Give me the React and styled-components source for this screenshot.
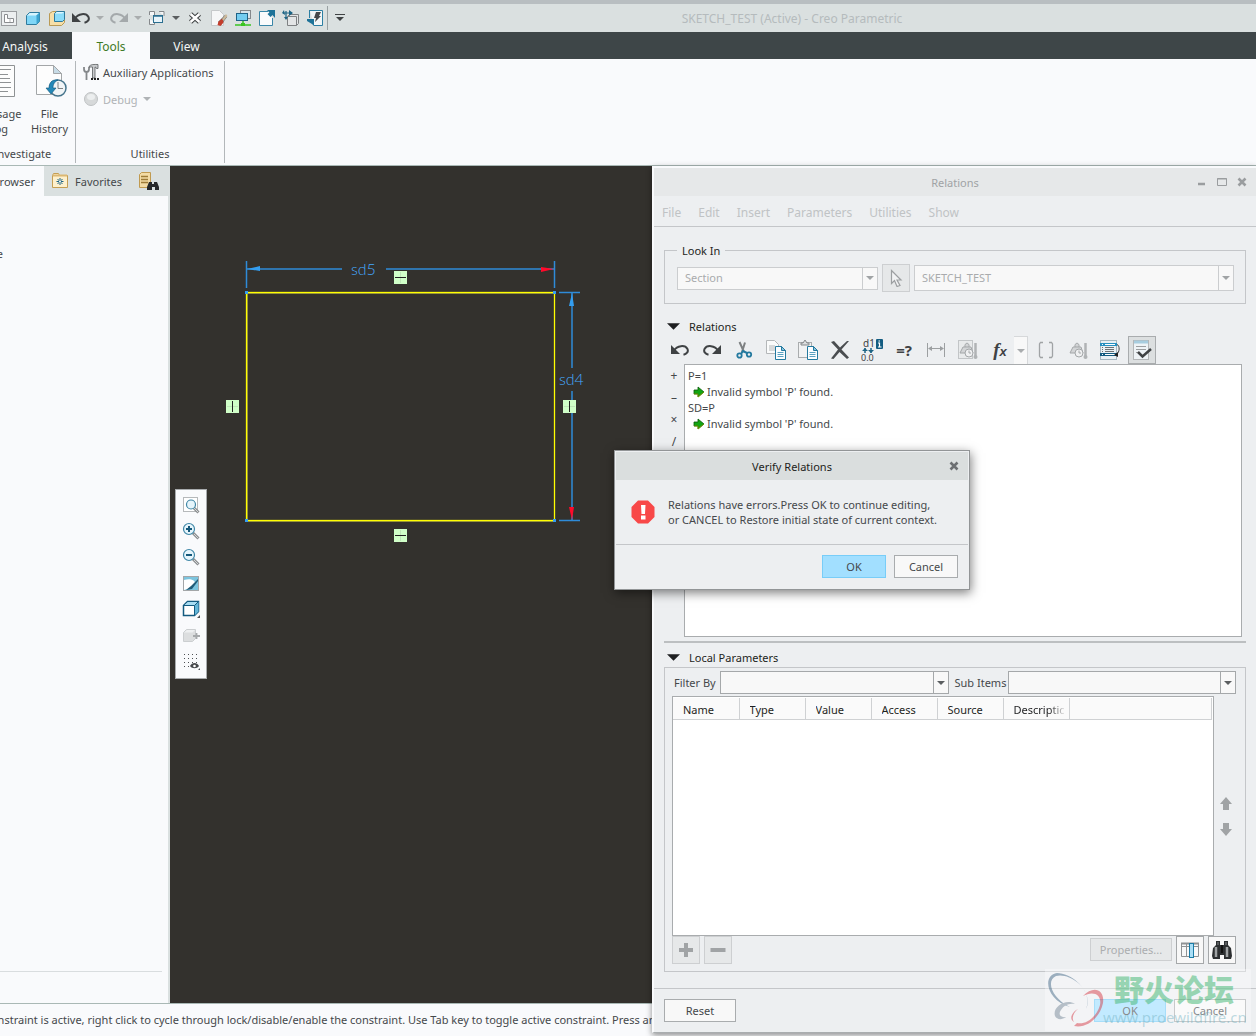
import React, { useState } from 'react';
import styled, { createGlobalStyle } from 'styled-components';

const GlobalStyle = createGlobalStyle`
  * {
    box-sizing: border-box;
  }

  body {
    margin: 0;
    font-family: 'Noto Sans', 'Open Sans', 'Noto Sans CJK SC', sans-serif;
    font-size: 11px;
    line-height: 15px;
    color: #45484b;
  }

  button, select, input {
    font: inherit;
    color: inherit;
  }
`;

const Page = styled.div`
  position: relative;
  display: flex;
  flex-direction: column;
  min-height: 100vh;
  overflow: hidden;
  background: #f9fafc;
`;

const Icon = styled.svg.attrs((props) => ({
  width: props.$size || 18,
  height: props.$size || 18,
  viewBox: props.viewBox || '0 0 18 18',
  fill: 'none',
  'aria-hidden': true,
}))`
  display: block;
  flex: none;
`;

const PlainButton = styled.button`
  display: flex;
  align-items: center;
  justify-content: center;
  padding: 0;
  border: 0;
  background: none;
`;

/* ---------- quick access bar ---------- */

const QuickBar = styled.header`
  display: flex;
  align-items: center;
  height: 32px;
  border-top: 4px solid #b8bec1;
  background: #dae0e0;
`;

const QuickTools = styled.div`
  display: flex;
  align-items: center;
  margin-left: -3px;
`;

const QuickButton = styled(PlainButton)`
  width: ${(props) => (props.$narrow ? '14px' : '24px')};
  height: 24px;
`;

const QuickDivider = styled.span`
  width: 1px;
  height: 24px;
  background: #9aa1a3;
`;

const AppTitle = styled.h1`
  flex: 1;
  margin: 0;
  padding-right: 24px;
  font-size: 12px;
  font-weight: 400;
  text-align: center;
  color: #b5bbbd;
`;

/* ---------- ribbon ---------- */

const TabBar = styled.nav`
  display: flex;
  height: 27px;
  background: #3e4648;
`;

const RibbonTab = styled.button`
  width: ${(props) => props.$width};
  padding: ${(props) => (props.$first ? '2px 22px 0 0' : '2px 0 0')};
  border: 0;
  font-size: 12px;
  background: ${(props) => (props.$active ? '#f9fafc' : 'transparent')};
  color: ${(props) => (props.$active ? '#3f7a26' : '#f4f6f6')};
`;

const Ribbon = styled.div`
  display: flex;
  height: 107px;
  padding: 2px 0;
  border-bottom: 1px solid #a9b8b5;
  background: #f9fafc;
`;

const RibbonGroup = styled.section`
  display: flex;
  flex-direction: column;
  justify-content: space-between;
  width: ${(props) => props.$width};
  margin-left: ${(props) => (props.$scrolled ? '-30px' : '0')};
  border-right: 1px solid #b3b7ba;
`;

const GroupName = styled.h2`
  margin: 0;
  padding-bottom: 2px;
  font-size: 11px;
  font-weight: 400;
  text-align: center;
`;

const LargeButtons = styled.div`
  display: flex;
  justify-content: flex-end;
`;

const LargeButton = styled.button`
  display: flex;
  flex-direction: column;
  align-items: center;
  gap: 8px;
  width: 51px;
  padding: 3px 0 0;
  border: 0;
  background: none;
`;

const SmallButtons = styled.div`
  display: flex;
  flex-direction: column;
  gap: 9px;
  padding: 2px 6px;
`;

const SmallButton = styled.button`
  display: flex;
  align-items: center;
  gap: 3px;
  height: 18px;
  padding: 0;
  border: 0;
  background: none;
  white-space: nowrap;

  &:disabled {
    color: #b0b3b6;
  }
`;

/* ---------- workspace ---------- */

const Workspace = styled.div`
  display: flex;
  flex: 1;
`;

const Sidebar = styled.aside`
  display: flex;
  flex-direction: column;
  flex: 0 0 170px;
  border-right: 2px solid #dae0e0;
  background: #f9fafc;
`;

const SidebarTabs = styled.div`
  display: flex;
  height: 30px;
  background: #dae0e0;
`;

const SidebarTab = styled.button`
  display: flex;
  align-items: center;
  justify-content: flex-end;
  gap: 6px;
  width: ${(props) => props.$width};
  padding: 0 9px 0 0;
  border: 0;
  background: ${(props) => (props.$active ? '#f9fafc' : 'transparent')};
  overflow: hidden;
`;

const TreeArea = styled.div`
  flex: 1;
  margin-right: 6px;
  padding-top: 50px;
  border-bottom: 1px solid #d9dddf;
`;

const TreeItem = styled.div`
  display: flex;
  justify-content: flex-end;
  width: 3px;
  overflow: hidden;
`;

const SidebarFoot = styled.div`
  height: 31px;
`;

const Canvas = styled.main`
  position: relative;
  flex: 1;
  background: #33312d;
`;

const SketchDrawing = styled.svg`
  display: block;

  text {
    font-family: Lato, sans-serif;
    font-size: 16px;
    font-weight: 300;
    fill: #45aaff;
  }
`;

const ViewBar = styled.div`
  position: absolute;
  top: 323px;
  left: 5px;
  display: flex;
  flex-direction: column;
  gap: 2px;
  padding: 3px 3px 5px;
  border: 1px solid #a8abad;
  background: #f9fafc;
`;

const ViewButton = styled(PlainButton)`
  width: 24px;
  height: 24px;
`;

const StatusBar = styled.footer`
  display: flex;
  align-items: center;
  height: 33px;
  padding-bottom: 1px;
  border-top: 1px solid #a9b8b5;
  background: #f9fafc;
  white-space: nowrap;
`;

const StatusText = styled.span`
  margin-left: -16px;
`;

/* ---------- relations window ---------- */

const Window = styled.section`
  position: absolute;
  top: 166px;
  right: 0;
  bottom: 3px;
  left: 652px;
  display: flex;
  flex-direction: column;
  border: 2px solid #f9fafc;
  border-right: 0;
  border-bottom: 1px solid #a9adaf;
  background: #edeff1;
  box-shadow: 0 2px 6px rgba(0, 0, 0, 0.45);
`;

const WindowTitle = styled.div`
  display: flex;
  align-items: center;
  height: 28px;
  padding: 0 8px;
  background: #e6e8e9;
  color: #a0a3a5;
`;

const TitleText = styled.h2`
  flex: 1;
  margin: 0;
  font-size: 11px;
  font-weight: 400;
  text-align: center;
`;

const TitleButtons = styled.div`
  display: flex;
  gap: 8px;
  width: ${(props) => props.$width};
  margin-left: -${(props) => props.$width};
`;

const MenuBar = styled.nav`
  display: flex;
  gap: 17px;
  height: 31px;
  padding: 2px 8px 0;
  border-bottom: 1px solid #c4c6c9;
`;

const MenuItem = styled.button`
  padding: 0;
  border: 0;
  background: none;
  font-size: 12px;
  color: #c0c3c5;
`;

const WindowBody = styled.div`
  display: flex;
  flex: 1;
  flex-direction: column;
  padding: 16px 10px;
`;

const LookIn = styled.fieldset`
  display: flex;
  align-items: center;
  gap: 4px;
  margin: 0;
  min-width: 0;
  padding: 6px 11px 11px 12px;
  border: 1px solid #c4c6c9;

  legend {
    padding: 0 5px;
    color: #1e1f21;
  }
`;

const SelectFrame = styled.div`
  display: flex;
  flex: ${(props) => props.$flex || 1};
  height: ${(props) => props.$height || '23px'};
  border: 1px solid ${(props) => (props.$disabled ? '#cbcdcf' : '#a5a8aa')};
  background: #f8f8f8;

  select {
    flex: 1;
    min-width: 0;
    padding: 0 7px 2px;
    border: 0;
    background: none;
    appearance: none;
    opacity: 1;
    color: #a9abad;
  }
`;

const SelectArrow = styled.span`
  display: flex;
  align-items: center;
  justify-content: center;
  width: 15px;
  border-left: 1px solid ${(props) => (props.$disabled ? '#cbcdcf' : '#a5a8aa')};
`;

const SquareButton = styled(PlainButton)`
  flex: none;
  width: 28px;
  height: 28px;
  border: 1px solid ${(props) => (props.$enabled ? '#a5a8aa' : '#cdcfd1')};
  background: ${(props) => (props.$enabled ? '#f8f8f8' : '#e6e8e9')};
`;

const SectionHead = styled.h3`
  display: flex;
  align-items: center;
  gap: 9px;
  height: 19px;
  margin: ${(props) => props.$space} 0 0;
  padding: 0 0 1px 3px;
  font-size: 11px;
  font-weight: 400;
  color: #1e1f21;
`;

const ToolRow = styled.div`
  display: flex;
  gap: 4px;
  padding: 0 2px;
`;

const ToolButton = styled(PlainButton)`
  width: 28px;
  height: 28px;
  border: ${(props) => (props.$pressed ? '1px solid #a9acae' : '0')};
  background: ${(props) => (props.$pressed ? '#dcdfe0' : 'none')};
`;

const SplitTool = styled.div`
  display: flex;
`;

const ToolMenu = styled(PlainButton)`
  width: 14px;
  height: 28px;
  border-top: 1px solid #d6d8da;
  border-right: 1px solid #d6d8da;
  background: #f8f8f8;
`;

const EditorRow = styled.div`
  display: flex;
  height: 273px;
  margin-right: 4px;
`;

const Operators = styled.div`
  display: flex;
  flex-direction: column;
  width: 20px;
`;

const Operator = styled.button`
  height: 22px;
  padding: 0;
  border: 0;
  background: none;
  font-size: 12px;
`;

const Editor = styled.div`
  flex: 1;
  padding: 3px;
  border: 1px solid #a9acae;
  background: #fff;
  line-height: 16px;
`;

const EditorLine = styled.div`
  display: flex;
  align-items: center;
  gap: 2px;
  padding-left: ${(props) => (props.$message ? '5px' : '0')};
`;

const Splitter = styled.div`
  height: 6px;
  border-bottom: 2px solid #bcbfc1;
`;

const ParamPanel = styled.div`
  display: flex;
  flex: 1;
  flex-direction: column;
  padding: 3px 9px 7px 7px;
  border: 1px solid #c4c6c9;
`;

const FilterRow = styled.div`
  display: flex;
  align-items: center;
  padding-left: 2px;
`;

const FilterLabel = styled.label`
  flex: none;
  padding-left: ${(props) => (props.$second ? '6px' : '0')};
  width: ${(props) => (props.$second ? '59px' : '46px')};
  white-space: nowrap;
`;

const TableRow = styled.div`
  display: flex;
  flex: 1;
  padding-top: 2px;
`;

const TableFrame = styled.div`
  flex: 1;
  padding: 1px 1px 0 0;
  border: 1px solid #a9acae;
  background: #fff;
`;

const ParamTable = styled.table`
  width: 100%;
  border-collapse: collapse;
  table-layout: fixed;

  th {
    width: ${(props) => props.$column};
    height: 21px;
    padding: 2px 5px 0 10px;
    border-right: 1px solid #cfd1d3;
    border-bottom: 1px solid #cfd1d3;
    background: #fafafa;
    font-weight: 400;
    text-align: left;
    color: #1e1f21;
  }

  th:last-child {
    width: auto;
  }
`;

const HeadText = styled.span`
  display: block;
  overflow: hidden;
  white-space: nowrap;
  mask-image: ${(props) => (props.$fade ? 'linear-gradient(90deg, #000 70%, transparent 105%)' : 'none')};
`;

const MoveButtons = styled.div`
  display: flex;
  flex-direction: column;
  justify-content: center;
  gap: 5px;
  width: 22px;
  padding-left: 2px;
`;

const PanelFoot = styled.div`
  display: flex;
  gap: 4px;
`;

const Spacer = styled.div`
  flex: 1;
`;

const TextButton = styled.button`
  width: ${(props) => props.$width || '72px'};
  height: 23px;
  padding: 0;
  border: 1px solid ${(props) => (props.$primary ? '#78cdf8' : '#a9acae')};
  background: ${(props) => (props.$primary ? '#a2dfff' : '#f8f8f8')};

  &:disabled {
    margin-top: 2px;
    border-color: #cdcfd1;
    background: #e6e8e9;
    color: #abadaf;
  }
`;

const WindowFoot = styled.div`
  display: flex;
  gap: 8px;
  padding: 10px;
  border-top: 1px solid #c4c6c9;
`;

const Watermark = styled.div`
  position: absolute;
  right: 5px;
  bottom: 5px;
  display: flex;
  width: 206px;
  height: 62px;
  background: rgba(255, 255, 255, 0.35);
  pointer-events: none;
`;

const WatermarkText = styled.div`
  position: absolute;
  top: 0;
  left: 58px;
  display: flex;
  flex-direction: column;
  white-space: nowrap;
`;

const WatermarkName = styled.strong`
  padding-left: 11px;
  font-family: 'Noto Sans CJK SC', sans-serif;
  font-size: 30px;
  font-weight: 900;
  line-height: 38px;
  color: rgba(60, 180, 110, 0.5);
`;

const WatermarkUrl = styled.span`
  font-size: 15px;
  line-height: 20px;
  color: rgba(110, 175, 190, 0.45);
`;

/* ---------- verify dialog ---------- */

const Dialog = styled.section`
  position: absolute;
  top: 450px;
  left: 614px;
  width: 356px;
  padding: 1px;
  border: 1px solid #929597;
  background: #edeff1;
  box-shadow: 1px 3px 10px rgba(0, 0, 0, 0.5);
`;

const DialogTitle = styled.div`
  display: flex;
  align-items: center;
  height: 28px;
  padding: 0 8px;
  background: #dadede;
  color: #1e1f21;
`;

const DialogBody = styled.div`
  display: flex;
  align-items: center;
  gap: 13px;
  height: 65px;
  padding: 0 15px;
  border-bottom: 1px solid #c4c6c9;
  white-space: nowrap;
`;

const DialogFoot = styled.div`
  display: flex;
  justify-content: flex-end;
  gap: 8px;
  padding: 10px;
`;

/* ---------- icons ---------- */

const Caret = ({ color = '#5b5e60', size = 8 }) => (
  <Icon $size={size} viewBox="0 0 8 8">
    <path d="M0 2h8L4 6z" fill={color} />
  </Icon>
);

const UndoIcon = ({ color = '#3f4244', flip }) => (
  <Icon>
    <g transform={flip ? 'translate(18 0) scale(-1 1)' : undefined}>
      <path d="M3 9.500C6 4.500 14 3.500 16.500 8c1.200 3-1 5-4 5.800" stroke={color} strokeWidth="2" />
      <path d="M0 4v9h9z" fill={color} />
    </g>
  </Icon>
);

const CrossIcon = ({ color = '#9a9d9f', size = 12 }) => (
  <Icon $size={size} viewBox="0 0 12 12">
    <path d="M2.500 2.500l7 7m0-7l-7 7" stroke={color} strokeWidth="2.600" />
  </Icon>
);

const SketchIcon = () => (
  <Icon>
    <rect x="1.500" y="2.500" width="15" height="14" fill="#eceff0" stroke="#9a9da0" />
    <path d="M4.500 5.500h3v4h6v4h-9z" fill="#fff" stroke="#8a8d90" />
    <path d="M10 9.500V13" stroke="#b6b9bb" />
  </Icon>
);

const CubeIcon = () => (
  <Icon>
    <path d="M2.500 6.500l3-3h10v9l-3 3h-10z" fill="#7fd6f7" stroke="#2f7a9d" strokeLinejoin="round" />
    <path d="M3 6.500l3-2.500h9l-3 2.500z" fill="#d7f4fd" />
    <path d="M12.500 6.500v9l3-3v-9z" fill="#3ba3cf" />
  </Icon>
);

const BoxedCubeIcon = () => (
  <Icon>
    <path d="M1.500 4.500l3-2h12v11l-3 3h-12z" fill="#f6dfa8" stroke="#b99a55" />
    <path d="M6.500 4.500l2-2h8v8l-2 2h-8z" fill="#8bdcf9" stroke="#2f7a9d" />
    <path d="M7 4.500l2-1.500h7l-2 1.500z" fill="#dff6fe" />
  </Icon>
);

const WindowsIcon = () => (
  <Icon>
    <path d="M1.500 6V2.500h5V6M11 2.500h5V7M1.500 10v5.500h5V13" fill="#f6f7f8" stroke="#85888b" />
    <rect x="5.500" y="6.500" width="9" height="7" fill="#e8f4fa" stroke="#2c6f90" />
    <path d="M5.500 7h9" stroke="#2c6f90" strokeWidth="1.500" />
  </Icon>
);

const CloseWindowIcon = () => (
  <Icon $size={14} viewBox="0 0 14 14">
    <path d="M2.500 3l9 8m0-8l-9 8" stroke="#3e4143" strokeWidth="4.500" />
    <path d="M2.500 3l9 8m0-8l-9 8" stroke="#fff" strokeWidth="2.400" />
  </Icon>
);

const EraseIcon = () => (
  <Icon>
    <path d="M1.500 1.500h8l4 4v11h-12z" fill="#f6f7f8" stroke="#c6c9cb" />
    <path d="M8 13l7-7 2 2-6 8z" fill="#5b5e60" />
    <path d="M8.500 12.500l4-3 1 4-3 3.500-3-1z" fill="#c33d2c" />
    <path d="M12 10l4-5 1.500 2-4 5z" fill="#cbb99b" />
  </Icon>
);

const MonitorsIcon = () => (
  <Icon>
    <rect x="6.500" y="1.500" width="10" height="8" fill="#d9e4ea" stroke="#85888b" />
    <rect x="2.500" y="4.500" width="11" height="7" fill="#74cdf0" stroke="#1f6286" />
    <path d="M1 16h16M9 12v4" stroke="#39c422" strokeWidth="1.500" />
    <path d="M7 14h4v3H7z" fill="#39c422" />
  </Icon>
);

const PageArrowIcon = () => (
  <Icon>
    <path d="M10 2.500H1.500v14h13V9" fill="#fafbfc" stroke="#3a86a8" />
    <path d="M9 1h8v8l-2.500-3-2 2-3-3 2-1.500z" fill="#1d7298" />
  </Icon>
);

const RotateBoxIcon = () => (
  <Icon>
    <path d="M5.500 7.500h9v9h-9zl2-2h9v9l-2 2" fill="#e3e5e6" stroke="#7e8183" />
    <path d="M1 4h9M4 2v6" stroke="#1d6485" strokeWidth="1.200" />
    <path d="M2 1L0 4l3 2zM7 1l4 3-4 3zM2 8h4l-2 3z" fill="#1d6485" />
  </Icon>
);

const RegenIcon = () => (
  <Icon>
    <path d="M4 1.500h12.500v15H8" fill="#f2f6f8" stroke="#2d7fa3" />
    <path d="M3.500 1V9" stroke="#2d7fa3" />
    <path d="M10 3h5l-2 4h2l-6 6 1-4H8z" fill="#45484b" />
    <path d="M1 10h7v7l-2-2-5-3z" fill="#1d7298" />
  </Icon>
);

const LogIcon = () => (
  <Icon $size={34} viewBox="0 0 34 34">
    <path d="M4.500 1.500h28v31h-28z" fill="#fdfdfd" stroke="#8f9294" />
    <path d="M8 5.500h21M8 10.500h18M8 14.500h20M8 18.500h21M8 23.500h21M8 27.500h18" stroke="#8f9294" />
  </Icon>
);

const HistoryIcon = () => (
  <Icon $size={34} viewBox="0 0 34 34">
    <path d="M3.500 1.500h17l8 8v21h-25z" fill="#fdfdfd" stroke="#a3a6a8" />
    <path d="M20.500 1.500v8h8z" fill="#c7dbe6" stroke="#a3a6a8" />
    <circle cx="25" cy="24" r="8" fill="#f1f5f7" stroke="#45748c" strokeWidth="1.500" />
    <path d="M25 18v6.500h5" stroke="#7e8183" />
    <path d="M25 16c-7-1-9 4-9 8h-3l5 6 5-6h-3c0-3 1-6 5-8z" fill="#2589b8" stroke="#12567a" strokeWidth="0.600" />
  </Icon>
);

const AuxIcon = () => (
  <Icon>
    <path d="M2 4v2c0 4 5 4 5 0V4M4.500 9v8" stroke="#85888b" strokeWidth="1.800" />
    <path d="M7 3.500c2-2.500 5-2 9-2v4h-1.500l-1-1.500H13v11h-2.500v-11H7z" fill="#c9cbcd" stroke="#5b5e60" strokeWidth="0.800" />
    <path d="M9 16h2M12 16h2M15 16h2" stroke="#222" strokeWidth="2" />
  </Icon>
);

const DebugIcon = () => (
  <Icon>
    <circle cx="9" cy="9" r="6.500" fill="#d7d9da" stroke="#bfc2c4" />
    <ellipse cx="9" cy="7" rx="4" ry="3" fill="#eceeef" />
  </Icon>
);

const FolderIcon = () => (
  <Icon>
    <path d="M1.500 3.500l1-2h5l1 2h8v12h-15z" fill="#fdf0cd" stroke="#c59e53" />
    <path d="M2 3.500h14" stroke="#dcb873" strokeWidth="2" />
    <path d="M9 6v7M5.500 9.500h7M6.500 7l5 5m0-5l-5 5" stroke="#1d6485" />
    <circle cx="9" cy="9.500" r="1" fill="#fff" />
  </Icon>
);

const FindTreeIcon = () => (
  <Icon $size={20} viewBox="0 0 20 20">
    <path d="M0.500 3.500l2-2h9v13l-2 2h-9z" fill="#f3dba5" stroke="#c09a50" />
    <path d="M2 5.500h7M2 8.500h7M2 11.500h7" stroke="#9e7b37" strokeWidth="1.500" />
    <path d="M10 11h3v2h2v-2h3l2 5v3h-4v-3h-3v3H8v-3z" fill="#26282a" />
  </Icon>
);

const ZoomIcon = ({ kind }) => (
  <Icon>
    {kind === 'fit' && <rect x="1.500" y="1.500" width="14" height="14" fill="#fff" stroke="#b6b9bb" />}
    <path d="M11 11l5.500 5.500" stroke="#8c8f91" strokeWidth="3" />
    <path d="M12 12l4 4" stroke="#d5d7d8" />
    <circle cx={kind === 'fit' ? 9 : 7} cy={kind === 'fit' ? 8.5 : 7} r={kind === 'fit' ? 4.5 : 5.500} fill="#e6f5fc" stroke="#3f86a6" strokeWidth="1.200" />
    {kind !== 'fit' && <path d={kind === 'in' ? 'M4 7h6M7 4v6' : 'M4 7h6'} stroke="#14587b" strokeWidth="2" />}
  </Icon>
);

const RepaintIcon = () => (
  <Icon>
    <rect x="1.500" y="2.500" width="15" height="14" fill="#7cc4de" stroke="#a3a6a8" />
    <path d="M2 6c6-2 11 0 11 3l-4 5-7 2z" fill="#fff" />
    <path d="M16 5l-7 7-5 4 6-1 6-8z" fill="#205b78" />
  </Icon>
);

const SolidIcon = () => (
  <Icon>
    <path d="M1.500 5.500l4-4h11v10l-4 4h-11z" fill="#fff" stroke="#145b80" strokeWidth="1.500" />
    <path d="M2 5.500l4-3.500h10l-3.500 3.500z" fill="#a8ddf3" />
    <path d="M12.500 5.500v10l4-4v-10z" fill="#64b6d8" />
    <path d="M1.500 5.500h11v10m0-10l4-4" stroke="#145b80" />
    <path d="M18 15v3h-3z" fill="#4d5052" />
  </Icon>
);

const GhostCubeIcon = () => (
  <Icon>
    <path d="M1.500 6.500l3-3h9v9l-3 3h-9z" fill="#dcdedf" stroke="#cbced0" />
    <path d="M2 6.500l3-2.500h8l-2.500 2.500z" fill="#eef0f1" />
    <path d="M11 10h7M14.500 7v6" stroke="#a6a9ab" strokeWidth="1.800" />
  </Icon>
);

const GridEyeIcon = () => (
  <Icon>
    <path d="M2 2.500h14M2 6.500h14M2 10.500h14M2 14.500h6" stroke="#4d5052" strokeDasharray="1 3" />
    <path d="M8 14c2-4 7-4 9 0-2 3-7 3-9 0z" fill="#45484b" />
    <circle cx="12.500" cy="14" r="1.300" fill="#fff" />
    <path d="M18 16v3h-3z" fill="#4d5052" />
  </Icon>
);

const PointerIcon = () => (
  <Icon>
    <path d="M4.500 1.500v13l3-3 2.500 6 3-1-3-5.500h4z" fill="#f1f2f3" stroke="#9c9fa1" strokeWidth="1.200" />
  </Icon>
);

const ScissorsIcon = () => (
  <Icon>
    <path d="M4.500 1l4.500 10M10 1.500L7 11" stroke="#7d8082" strokeWidth="2" />
    <circle cx="4.500" cy="14.500" r="2.200" stroke="#23799f" strokeWidth="1.800" />
    <circle cx="14" cy="13.500" r="2.200" stroke="#23799f" strokeWidth="1.800" />
    <path d="M6 13l2-3 4 2" stroke="#23799f" strokeWidth="2" />
  </Icon>
);

const CopyIcon = ({ clipboard }) => (
  <Icon $size={20} viewBox="0 0 20 20">
    {clipboard ? (
      <>
        <rect x="0.500" y="2.500" width="13" height="15" fill="#f1f2f3" stroke="#a9acae" />
        <path d="M3 3h2l2-3 2 3h2v2H3z" fill="#dcdedf" stroke="#85888b" />
      </>
    ) : (
      <>
        <path d="M0.500 0.500h8l4 4v9h-12z" fill="#fafbfb" stroke="#b4b7b9" />
        <path d="M3 6h6M3 8h6M3 10h6" stroke="#b4b7b9" />
      </>
    )}
    <path d="M9.500 6.500h6l4 4v9h-10z" fill="#fafdff" stroke="#23799f" />
    <path d="M15.500 6.500v4h4z" fill="#8ac5df" stroke="#23799f" />
    <path d="M11.500 12.500h6M11.500 14.500h6M11.500 16.500h6" stroke="#5aa2c2" />
  </Icon>
);

const DeleteIcon = () => (
  <Icon>
    <path d="M0 1l3-1 6 6.500L16 0l2 0-7.500 8.500 7.500 8-2 1.500-7.500-7L2.500 18l-2.500-.5 7-9z" fill="#4a4d50" />
  </Icon>
);

const UnitsIcon = () => (
  <Icon $size={22} viewBox="0 0 22 22">
    <text x="2" y="8" fontSize="10" fill="#3f4244">d1</text>
    <path d="M4 9v5M10 9v5" stroke="#1d6485" strokeWidth="1.500" />
    <path d="M1 12l3-3 3 3zM7 11h6l-3 3z" fill="#1d6485" />
    <text x="0" y="22" fontSize="9" fill="#3f4244">0.0</text>
    <rect x="15" y="0" width="7" height="10" rx="1" fill="#135c81" />
    <path d="M17 4h1.500v4M17 8h3.500M17.500 2h1.500" stroke="#fff" strokeWidth="1.200" />
  </Icon>
);

const EqualsText = styled.b`
  font-size: 15px;
  color: #3f4244;
`;

const WidthIcon = () => (
  <Icon>
    <path d="M.5 2v14M17.500 2v14M2 7.500h14" stroke="#9c9fa1" />
    <path d="M1 7.500l4-2.500v5zM17 7.500l-4-2.500v5z" fill="#9c9fa1" />
  </Icon>
);

const ClockBagIcon = ({ framed }) => (
  <Icon $size={20} viewBox="0 0 20 20">
    {framed && <rect x="0.500" y="0.500" width="14" height="18" fill="#e8eaeb" stroke="#c2c5c7" />}
    <path d="M2 13l3-6h8l2 6zM7 7c-1-5 5-5 4 0" fill="#d2d4d6" stroke="#a4a7a9" />
    <circle cx="11" cy="13" r="4" fill="#eff0f1" stroke="#a4a7a9" />
    <path d="M11 10.500V13h2" stroke="#a4a7a9" />
    <path d="M17.500 3v14" stroke="#b0b3b5" strokeWidth="2.500" />
    <circle cx="17.500" cy="17" r="2" fill="#b0b3b5" />
  </Icon>
);

const FunctionText = styled.i`
  font-family: 'Liberation Serif', serif;
  font-size: 19px;
  font-weight: 700;
  color: #3f4244;

  small {
    font-family: 'Liberation Sans', sans-serif;
    font-size: 13px;
  }
`;

const BracketsIcon = () => (
  <Icon>
    <path d="M6 1.500H3.500L2.500 3v12l1 1.500H6M12 1.500h2.500l1 1.500v12l-1 1.500H12" stroke="#a0a3a5" strokeWidth="1.300" />
  </Icon>
);

const SortIcon = () => (
  <Icon $size={20} viewBox="0 0 20 20">
    <rect x="0.500" y="0.500" width="16" height="19" fill="#e8f0f4" stroke="#a4b6bf" />
    <path d="M0 4.500h17" stroke="#2790c0" strokeWidth="3" />
    <path d="M0 14.500h17" stroke="#125b80" strokeWidth="3" />
    <path d="M2 4.500h1M2 14.500h1M5 4.500h10M5 14.500h10" stroke="#fff" />
    <path d="M2 7.500h1M2 9.500h1M2 11.500h1M5 7.500h9M5 9.500h9M5 11.500h9" stroke="#6f7274" />
    <path d="M17 4.500c3 1 3 8-1 10.500" stroke="#3f4244" />
    <path d="M18 12v5l-4-2z" fill="#222" />
  </Icon>
);

const VerifyIcon = () => (
  <Icon $size={20} viewBox="0 0 20 20">
    <rect x="1.500" y="0.500" width="15" height="19" fill="#eef3f6" stroke="#b3b6b8" />
    <path d="M2 2h14" stroke="#a7cddf" strokeWidth="3" />
    <path d="M4 6.500h10M4 9.500h10M4 12.500h4" stroke="#9c9fa1" />
    <path d="M6 12l4.500 4.500L19 9" stroke="#3f4244" strokeWidth="2.500" />
  </Icon>
);

const GreenArrow = () => (
  <Icon $size={12} viewBox="0 0 12 12">
    <path d="M1 4h4V1l6 5-6 5V8H1z" fill="#12a512" stroke="#0b5c0b" strokeWidth="0.800" />
    <path d="M1 8h4v3l6-5" stroke="#8a9a00" strokeWidth="0.800" />
  </Icon>
);

const PlusMinusIcon = ({ minus }) => (
  <Icon>
    <path d={minus ? 'M1.500 9h15' : 'M2 9h14M9 2v14'} stroke="#a0a3a5" strokeWidth="4" />
  </Icon>
);

const MoveIcon = ({ down }) => (
  <Icon $size={20} viewBox="0 0 20 20">
    <path d={down ? 'M7 4h6v6h3l-6 7-6-7h3z' : 'M7 16h6v-6h3l-6-7-6 7h3z'} fill="#a0a3a5" />
  </Icon>
);

const ColumnsIcon = () => (
  <Icon>
    <path d="M.5 2.500h17v13H.5zM0 5.500h18M5.500 3v12" stroke="#8f9294" />
    <path d="M0 2.500h18" stroke="#8f9294" strokeWidth="2" />
    <rect x="8.500" y="2.500" width="4" height="14" fill="#a9def6" stroke="#1a7ba5" />
  </Icon>
);

const BinocularsIcon = () => (
  <Icon $size={20} viewBox="0 0 20 20">
    <path d="M4 1h4v4h4V1h4v4l3 3 1 8-1 3h-7v-4H8v4H1l-1-3 1-8 3-3z" fill="#2c2f31" />
    <path d="M4 7v10M15 7v10" stroke="#9fa2a4" strokeWidth="2.500" />
    <path d="M6 2v3M14 2v3" stroke="#85888a" />
    <path d="M10 5v8" stroke="#111" strokeWidth="2" />
  </Icon>
);

const AlertIcon = () => (
  <Icon $size={24} viewBox="0 0 24 24">
    <path d="M7 0.500h10L23.500 7v10L17 23.500H7L.5 17V7z" fill="#f84848" />
    <path d="M10 5h4.500L14 14h-3.500zM10 15.500h4.500v4H10z" fill="#fff" />
  </Icon>
);

const WatermarkLogo = () => (
  <Icon $size={62} viewBox="0 0 62 62">
    <g opacity="0.450">
      <path d="M41 40C49 24 28 4 12 4-3 6 1 31 25 38 8 30 0 12 11 7c12-4 38 12 30 33z" fill="#315b7c" />
      <path d="M38 27c10-11 22-7 20 7-3 15-17 26-29 23l3-3c10 2 20-7 23-18 2-10-6-15-17-9z" fill="#d22a36" />
      <path d="M30 35c-9-6-23 3-20 12 2 4 7 4 11 1-6 1-8-3-5-7 3-5 8-7 14-6z" fill="#6b7f90" />
      <path d="M33 40c-4 3-7 9-4 13-6-3-1-11 4-13z" fill="#d22a36" />
    </g>
  </Icon>
);

const Sketch = () => (
  <SketchDrawing width="430" height="400" viewBox="170 166 430 400" role="img" aria-label="Sketch">
    <rect x="247.500" y="293.500" width="307" height="228" fill="none" stroke="#8a8640" />
    <rect x="246.500" y="292.500" width="308" height="228" fill="none" stroke="#ffff00" strokeWidth="1.300" />
    <path
      d="M246.500 261v27M554.500 261v27M247 269h95M386 269h168M559 292.500h21M559 520.500h21M572 293v75M572 391v130"
      fill="none"
      stroke="#2f8bd8"
      strokeWidth="1.500"
    />
    <path d="M247 269l13-3v5zM572 293l-3 13h5z" fill="#349ef0" />
    <path d="M554 269l-13-2v5zM572 520l-3-13h5z" fill="#ff0a2a" />
    <path d="M245 291h3v3h-3zM553 291h3v3h-3zM245 519h3v3h-3zM553 519h3v3h-3z" fill="#349ef0" />
    <text x="351" y="275">sd5</text>
    <text x="559" y="385">sd4</text>
    {[[394, 271, true], [394, 529, true], [226, 400, false], [563, 400, false]].map(([x, y, flat]) => (
      <g key={`${x}-${y}`} transform={`translate(${x} ${y})`}>
        <rect width="13" height="13" fill="#d0ffc8" />
        <path d="M1 6.500h11M6.500 1v11" stroke="#bfe6b8" />
        <path d={flat ? 'M1 6.500h11' : 'M6.500 1v11'} stroke="#222" />
      </g>
    ))}
  </SketchDrawing>
);

/* ---------- page parts ---------- */

const menus = ['File', 'Edit', 'Insert', 'Parameters', 'Utilities', 'Show'];
const columns = ['Name', 'Type', 'Value', 'Access', 'Source', 'Description'];
const operators = ['+', '–', '×', '/'];

const viewTools = [
  ['Refit', <ZoomIcon kind="fit" />],
  ['Zoom in', <ZoomIcon kind="in" />],
  ['Zoom out', <ZoomIcon kind="out" />],
  ['Repaint', <RepaintIcon />],
  ['Display style', <SolidIcon />],
  ['Section view', <GhostCubeIcon />],
  ['Display filters', <GridEyeIcon />],
];

const quickTools = [
  ['Sketch', <SketchIcon />],
  ['Model', <CubeIcon />],
  ['Package', <BoxedCubeIcon />],
  ['Undo', <UndoIcon />],
  ['Undo list', <Caret color="#a9adae" />, true],
  ['Redo', <UndoIcon color="#a4a9ab" flip />],
  ['Redo list', <Caret color="#a9adae" />, true],
  ['Windows', <WindowsIcon />],
  ['Window list', <Caret />, true],
  ['Close', <CloseWindowIcon />],
  ['Erase', <EraseIcon />],
  ['Session', <MonitorsIcon />],
  ['Open', <PageArrowIcon />],
  ['Reorient', <RotateBoxIcon />],
  ['Regenerate', <RegenIcon />],
];

const Select = ({ label, id, options = [''], disabled, flex, height }) => (
  <SelectFrame $disabled={disabled} $flex={flex} $height={height}>
    <select id={id} aria-label={label} disabled={disabled}>
      {options.map((option) => (
        <option key={option}>{option}</option>
      ))}
    </select>
    <SelectArrow $disabled={disabled}>
      <Caret color={disabled ? '#a0a3a5' : '#5b5e60'} />
    </SelectArrow>
  </SelectFrame>
);

const RelationsWindow = () => {
  const [verify, setVerify] = useState(true);

  return (
    <Window>
      <WindowTitle>
        <TitleText>Relations</TitleText>
        <TitleButtons $width="52px">
          <PlainButton aria-label="Minimize">
            <Icon $size={12} viewBox="0 0 12 12">
              <path d="M2 8h7" stroke="#9a9d9f" strokeWidth="2.500" />
            </Icon>
          </PlainButton>
          <PlainButton aria-label="Maximize">
            <Icon $size={12} viewBox="0 0 12 12">
              <path d="M1.500 2.500h9v7h-9zM1 3h10" stroke="#9a9d9f" />
            </Icon>
          </PlainButton>
          <PlainButton aria-label="Close relations">
            <CrossIcon />
          </PlainButton>
        </TitleButtons>
      </WindowTitle>
      <MenuBar>
        {menus.map((menu) => (
          <MenuItem key={menu}>{menu}</MenuItem>
        ))}
      </MenuBar>
      <WindowBody>
        <LookIn>
          <legend>Look In</legend>
          <Select label="Scope" options={['Section']} disabled flex="0 0 201px" />
          <SquareButton aria-label="Select object">
            <PointerIcon />
          </SquareButton>
          <Select label="Object" options={['SKETCH_TEST']} disabled height="26px" />
        </LookIn>
        <SectionHead $space="13px">
          <Caret color="#1e1f21" size={13} />
          Relations
        </SectionHead>
        <ToolRow>
          <ToolButton aria-label="Undo edit"><UndoIcon /></ToolButton>
          <ToolButton aria-label="Redo edit"><UndoIcon flip /></ToolButton>
          <ToolButton aria-label="Cut"><ScissorsIcon /></ToolButton>
          <ToolButton aria-label="Copy"><CopyIcon /></ToolButton>
          <ToolButton aria-label="Paste"><CopyIcon clipboard /></ToolButton>
          <ToolButton aria-label="Delete"><DeleteIcon /></ToolButton>
          <ToolButton aria-label="Toggle dimensions"><UnitsIcon /></ToolButton>
          <ToolButton aria-label="Evaluate"><EqualsText>=?</EqualsText></ToolButton>
          <ToolButton aria-label="Show dimension"><WidthIcon /></ToolButton>
          <ToolButton aria-label="Set units"><ClockBagIcon framed /></ToolButton>
          <SplitTool>
            <ToolButton aria-label="Insert function">
              <FunctionText>f<small>x</small></FunctionText>
            </ToolButton>
            <ToolMenu aria-label="Function list"><Caret color="#a9acae" /></ToolMenu>
          </SplitTool>
          <ToolButton aria-label="Brackets"><BracketsIcon /></ToolButton>
          <ToolButton aria-label="Units"><ClockBagIcon /></ToolButton>
          <ToolButton aria-label="Sort relations"><SortIcon /></ToolButton>
          <ToolButton aria-label="Verify" $pressed={verify} onClick={() => setVerify(!verify)}>
            <VerifyIcon />
          </ToolButton>
        </ToolRow>
        <EditorRow>
          <Operators>
            {operators.map((operator) => (
              <Operator key={operator}>{operator}</Operator>
            ))}
          </Operators>
          <Editor role="textbox" aria-label="Relations" aria-multiline="true" tabIndex={0}>
            {['P=1', 'SD=P'].map((line) => (
              <React.Fragment key={line}>
                <EditorLine>{line}</EditorLine>
                <EditorLine $message>
                  <GreenArrow />
                  Invalid symbol 'P' found.
                </EditorLine>
              </React.Fragment>
            ))}
          </Editor>
        </EditorRow>
        <Splitter />
        <SectionHead $space="5px">
          <Caret color="#1e1f21" size={13} />
          Local Parameters
        </SectionHead>
        <ParamPanel>
          <FilterRow>
            <FilterLabel htmlFor="filter-by">Filter By</FilterLabel>
            <Select id="filter-by" />
            <FilterLabel htmlFor="sub-items" $second>Sub Items</FilterLabel>
            <Select id="sub-items" />
          </FilterRow>
          <TableRow>
            <TableFrame>
              <ParamTable $column="66px">
                <thead>
                  <tr>
                    {columns.map((column) => (
                      <th key={column}>
                        <HeadText $fade={column === 'Description'}>{column}</HeadText>
                      </th>
                    ))}
                    <th aria-label="Empty" />
                  </tr>
                </thead>
              </ParamTable>
            </TableFrame>
            <MoveButtons>
              <PlainButton aria-label="Move up"><MoveIcon /></PlainButton>
              <PlainButton aria-label="Move down"><MoveIcon down /></PlainButton>
            </MoveButtons>
          </TableRow>
          <PanelFoot>
            <SquareButton aria-label="Add parameter"><PlusMinusIcon /></SquareButton>
            <SquareButton aria-label="Remove parameter"><PlusMinusIcon minus /></SquareButton>
            <Spacer />
            <TextButton $width="82px" disabled>Properties...</TextButton>
            <SquareButton $enabled aria-label="Set columns"><ColumnsIcon /></SquareButton>
            <SquareButton $enabled aria-label="Find parameter"><BinocularsIcon /></SquareButton>
          </PanelFoot>
        </ParamPanel>
      </WindowBody>
      <WindowFoot>
        <TextButton>Reset</TextButton>
        <Spacer />
        <TextButton $primary>OK</TextButton>
        <TextButton>Cancel</TextButton>
      </WindowFoot>
    </Window>
  );
};

const VerifyDialog = ({ onClose }) => (
  <Dialog role="dialog" aria-labelledby="verify-title">
    <DialogTitle>
      <TitleText id="verify-title">Verify Relations</TitleText>
      <TitleButtons $width="12px">
        <PlainButton aria-label="Close" onClick={onClose}>
          <CrossIcon color="#6c6f72" />
        </PlainButton>
      </TitleButtons>
    </DialogTitle>
    <DialogBody>
      <AlertIcon />
      <div>
        Relations have errors.Press OK to continue editing,
        <br />
        or CANCEL to Restore initial state of current context.
      </div>
    </DialogBody>
    <DialogFoot>
      <TextButton $width="64px" $primary onClick={onClose}>OK</TextButton>
      <TextButton $width="64px" onClick={onClose}>Cancel</TextButton>
    </DialogFoot>
  </Dialog>
);

const App = () => {
  const [showDialog, setShowDialog] = useState(true);

  return (
    <Page>
      <GlobalStyle />
      <QuickBar>
        <QuickTools>
          {quickTools.map(([label, icon, narrow]) => (
            <QuickButton key={label} aria-label={label} $narrow={narrow}>{icon}</QuickButton>
          ))}
          <QuickDivider />
          <QuickButton aria-label="Customize">
            <Icon $size={10} viewBox="0 0 10 10">
              <path d="M0 1.500h10" stroke="#3f4244" />
              <path d="M1 4h8L5 8z" fill="#3f4244" />
            </Icon>
          </QuickButton>
        </QuickTools>
        <AppTitle>SKETCH_TEST (Active) - Creo Parametric</AppTitle>
      </QuickBar>
      <TabBar>
        <RibbonTab $width="72px" $first>Analysis</RibbonTab>
        <RibbonTab $width="78px" $active>Tools</RibbonTab>
        <RibbonTab $width="73px">View</RibbonTab>
      </TabBar>
      <Ribbon>
        <RibbonGroup $width="106px" $scrolled>
          <LargeButtons>
            <LargeButton>
              <LogIcon />
              <span>Message<br />Log</span>
            </LargeButton>
            <LargeButton>
              <HistoryIcon />
              <span>File<br />History</span>
            </LargeButton>
          </LargeButtons>
          <GroupName>Investigate</GroupName>
        </RibbonGroup>
        <RibbonGroup $width="149px">
          <SmallButtons>
            <SmallButton><AuxIcon />Auxiliary Applications</SmallButton>
            <SmallButton disabled>
              <DebugIcon />Debug&nbsp;<Caret color="#b0b3b6" />
            </SmallButton>
          </SmallButtons>
          <GroupName>Utilities</GroupName>
        </RibbonGroup>
      </Ribbon>
      <Workspace>
        <Sidebar>
          <SidebarTabs>
            <SidebarTab $width="44px" $active>Browser</SidebarTab>
            <SidebarTab $width="87px"><FolderIcon />Favorites</SidebarTab>
            <SidebarTab $width="37px" aria-label="Search tree"><FindTreeIcon /></SidebarTab>
          </SidebarTabs>
          <TreeArea>
            <TreeItem>e</TreeItem>
          </TreeArea>
          <SidebarFoot />
        </Sidebar>
        <Canvas>
          <Sketch />
          <ViewBar>
            {viewTools.map(([label, icon]) => (
              <ViewButton key={label} aria-label={label}>{icon}</ViewButton>
            ))}
          </ViewBar>
        </Canvas>
      </Workspace>
      <StatusBar>
        <StatusText>
          Constraint is active, right click to cycle through lock/disable/enable the constraint. Use Tab key to toggle
          active constraint. Press and
        </StatusText>
      </StatusBar>
      <RelationsWindow />
      {showDialog && <VerifyDialog onClose={() => setShowDialog(false)} />}
      <Watermark>
        <WatermarkLogo />
        <WatermarkText>
          <WatermarkName>野火论坛</WatermarkName>
          <WatermarkUrl>www.proewildfire.cn</WatermarkUrl>
        </WatermarkText>
      </Watermark>
    </Page>
  );
};

export default App;
